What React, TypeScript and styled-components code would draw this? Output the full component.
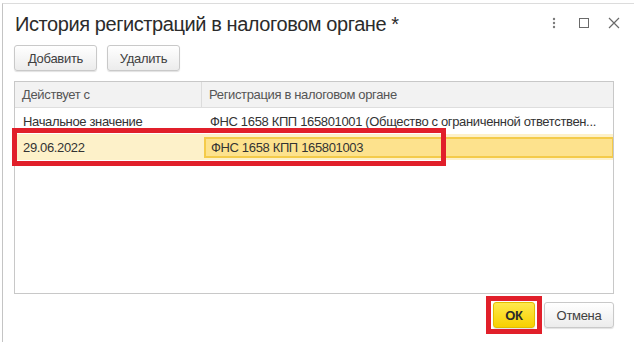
import React from "react";
import styled, { createGlobalStyle } from "styled-components";

const Global = createGlobalStyle`
  html, body { margin: 0; padding: 0; background: #fff; }
  body { font-family: "Liberation Sans", Arial, sans-serif; }
  * { box-sizing: border-box; }
`;

const Page = styled.div`
  position: relative;
  width: 634px;
  height: 342px;
  overflow: hidden;
  background: #fff;
`;

const Dialog = styled.div`
  margin: 3px 0 0 2px;
  height: 339px;
  border-left: 1px solid #c4c4c4;
  border-top: 1px solid #dcdcdc;
  display: flex;
  flex-direction: column;
  background: #fff;
`;

const TitleBar = styled.div`
  display: flex;
  align-items: center;
  justify-content: space-between;
  padding: 8px 5px 0 12px;
`;

const Title = styled.h1`
  margin: 0;
  font-size: 20px;
  line-height: 24px;
  font-weight: normal;
  letter-spacing: -0.42px;
  color: #2b2b2b;
`;

const TitleIcons = styled.div`
  display: flex;
  align-items: center;
  margin-top: -2px;
`;

const IconButton = styled.span`
  width: 30px;
  height: 20px;
  display: flex;
  align-items: center;
  justify-content: center;
  color: #6e6e6e;
`;

const Body = styled.div`
  display: flex;
  flex-direction: column;
  padding: 0 20px 0 11px;
`;

const Toolbar = styled.div`
  display: flex;
  gap: 10px;
  margin-top: 9px;
`;

const Button = styled.button<{ $primary?: boolean; $w: number }>`
  width: ${(p) => p.$w}px;
  height: 26px;
  padding: 0;
  font-family: "Liberation Sans", Arial, sans-serif;
  font-size: 13px;
  letter-spacing: -0.3px;
  color: ${(p) => (p.$primary ? "#2a2a2a" : "#404040")};
  font-weight: ${(p) => (p.$primary ? "bold" : "normal")};
  border-radius: 3px;
  border: 1px solid ${(p) => (p.$primary ? "#e2bd00" : "#c9c9c9")};
  background: ${(p) =>
    p.$primary
      ? "linear-gradient(#ffe94d, #f7d000)"
      : "linear-gradient(#ffffff, #ececec)"};
  box-shadow: 0 1px 1px rgba(0, 0, 0, 0.12);
  cursor: pointer;
`;

const Table = styled.div`
  margin-top: 10px;
  height: 213px;
  border: 1px solid #c8c8c8;
  display: flex;
  flex-direction: column;
`;

const HeaderRow = styled.div`
  display: flex;
  height: 26px;
  background: #f2f2f2;
  border-bottom: 1px solid #dedede;
`;

const HeaderCell = styled.div<{ $w?: number }>`
  ${(p) => (p.$w ? `width: ${p.$w}px;` : "flex: 1;")}
  display: flex;
  align-items: center;
  padding-left: 7px;
  font-size: 13px;
  letter-spacing: -0.35px;
  color: #555;
  border-right: ${(p) => (p.$w ? "1px solid #dcdcdc" : "none")};
`;

const Row = styled.div<{ $selected?: boolean }>`
  display: flex;
  height: 26px;
  background: ${(p) => (p.$selected ? "#fdf1c9" : "#fff")};
`;

const Cell = styled.div<{ $w?: number }>`
  ${(p) => (p.$w ? `width: ${p.$w}px;` : "flex: 1; min-width: 0;")}
  display: flex;
  align-items: center;
  padding: 0 8px;
  font-size: 13px;
  letter-spacing: -0.35px;
  color: #333;
  white-space: nowrap;
  overflow: hidden;
`;

const EditCell = styled.div`
  flex: 1;
  min-width: 0;
  margin: 3px 0 2px 2px;
  display: flex;
  align-items: center;
  padding-left: 5px;
  font-size: 13px;
  letter-spacing: -0.35px;
  color: #333;
  background: #fde28d;
  border: 2px solid #f4cb4a;
  border-right-width: 1px;
`;

const Footer = styled.div`
  display: flex;
  justify-content: flex-end;
  gap: 9px;
  margin-top: 8px;
`;

const Highlight = styled.div<{ $x: number; $y: number; $w: number; $h: number }>`
  position: absolute;
  left: ${(p) => p.$x}px;
  top: ${(p) => p.$y}px;
  width: ${(p) => p.$w}px;
  height: ${(p) => p.$h}px;
  border: 5px solid #e11f2a;
  pointer-events: none;
`;

export default function App() {
  return (
    <Page>
      <Global />
      <Dialog>
        <TitleBar>
          <Title>История регистраций в налоговом органе *</Title>
          <TitleIcons>
            <IconButton>
              <svg width="4" height="12" viewBox="0 0 4 12">
                <circle cx="2" cy="2" r="1.2" fill="#7a7a7a" />
                <circle cx="2" cy="6" r="1.2" fill="#7a7a7a" />
                <circle cx="2" cy="10" r="1.2" fill="#7a7a7a" />
              </svg>
            </IconButton>
            <IconButton>
              <svg width="10" height="10" viewBox="0 0 10 10">
                <rect x="0.5" y="0.5" width="9" height="9" fill="none" stroke="#6a6a6a" strokeWidth="1" />
              </svg>
            </IconButton>
            <IconButton>
              <svg width="12" height="12" viewBox="0 0 12 12">
                <path d="M1 1 L11 11 M11 1 L1 11" stroke="#6a6a6a" strokeWidth="1.2" fill="none" />
              </svg>
            </IconButton>
          </TitleIcons>
        </TitleBar>
        <Body>
          <Toolbar>
            <Button $w={83}>Добавить</Button>
            <Button $w={73}>Удалить</Button>
          </Toolbar>
          <Table>
            <HeaderRow>
              <HeaderCell $w={187}>Действует с</HeaderCell>
              <HeaderCell>Регистрация в налоговом органе</HeaderCell>
            </HeaderRow>
            <Row>
              <Cell $w={187}>Начальное значение</Cell>
              <Cell>ФНС 1658 КПП 165801001 (Общество с ограниченной ответствен...</Cell>
            </Row>
            <Row $selected>
              <Cell $w={187}>29.06.2022</Cell>
              <EditCell>ФНС 1658 КПП 165801003</EditCell>
            </Row>
          </Table>
          <Footer>
            <Button $primary $w={42}>ОК</Button>
            <Button $w={70}>Отмена</Button>
          </Footer>
        </Body>
      </Dialog>
      <Highlight $x={12} $y={128} $w={434} $h={38} />
      <Highlight $x={486} $y={296} $w={56} $h={38} />
    </Page>
  );
}
